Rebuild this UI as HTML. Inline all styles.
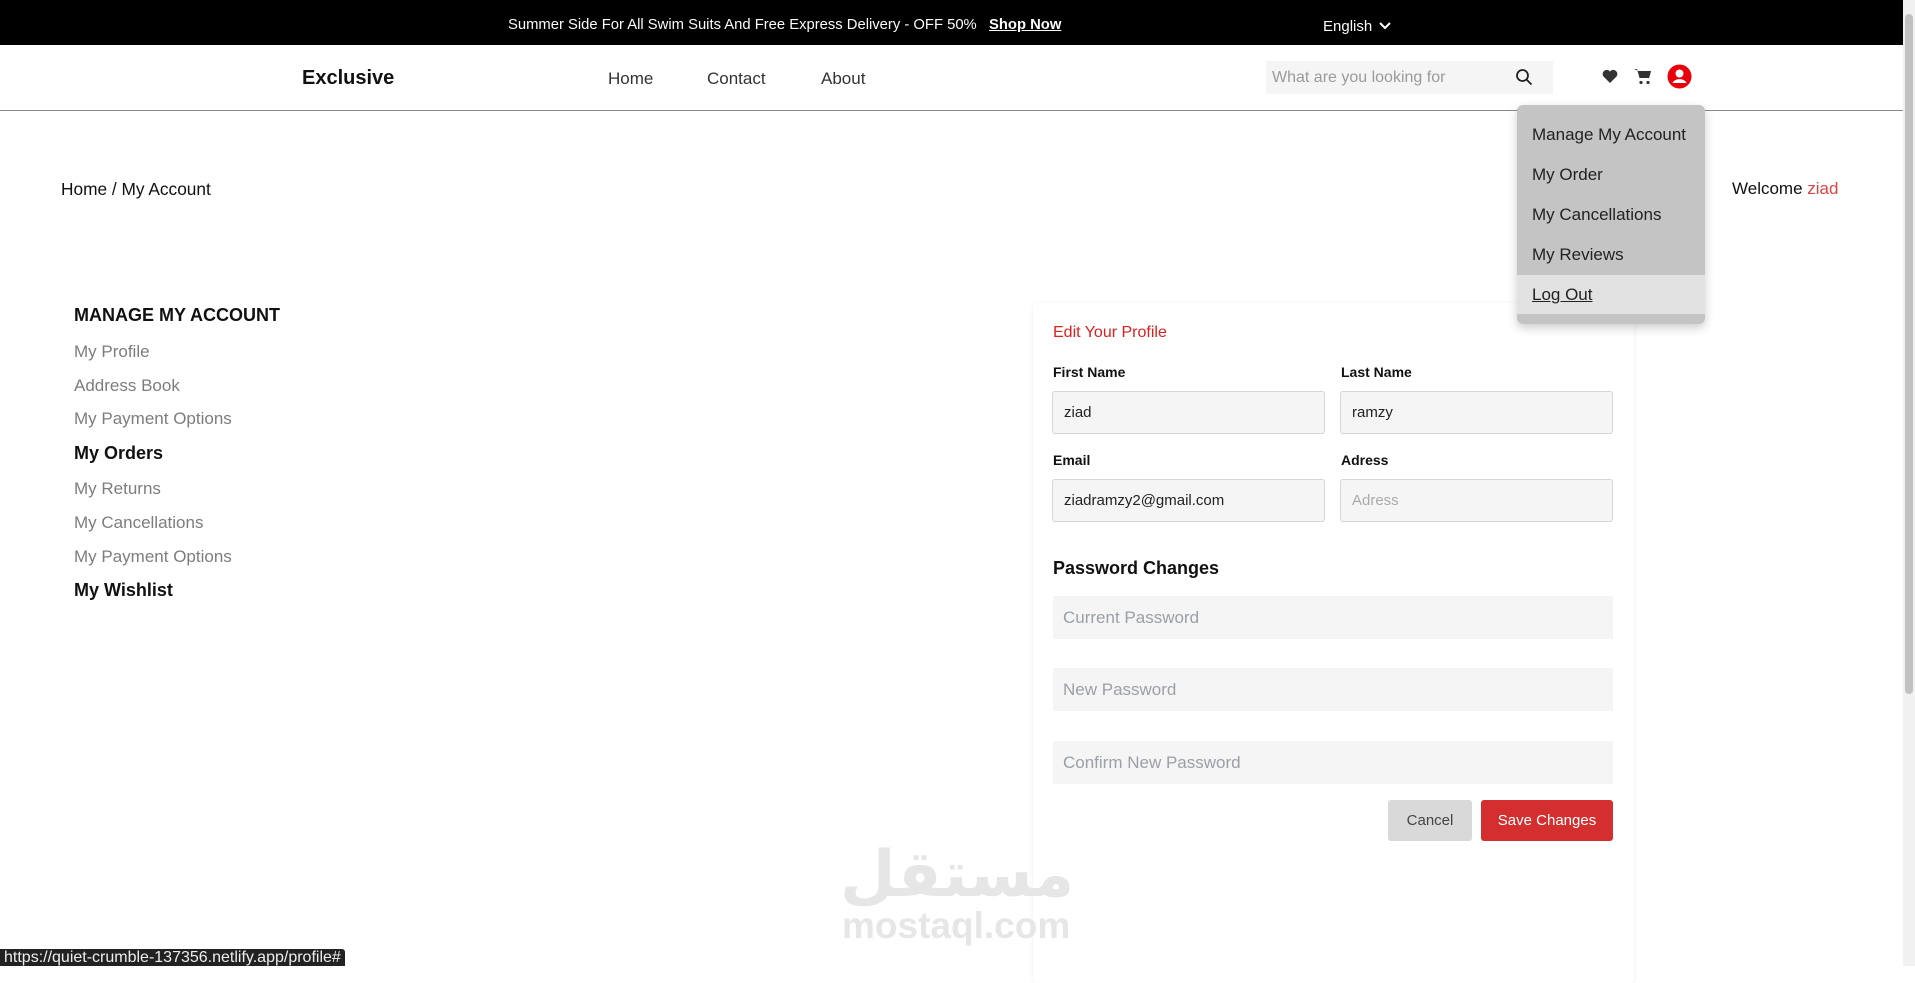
<!DOCTYPE html>
<html><head><meta charset="utf-8"><style>
*{margin:0;padding:0;box-sizing:border-box}
body{width:1915px;height:966px;overflow:hidden;background:#fff;font-family:"Liberation Sans",sans-serif;position:relative;color:#000}
.a{position:absolute;white-space:nowrap}
.top{position:absolute;left:0;top:0;width:1903px;height:45px;background:#000;color:#fafafa;font-size:15px}
.inp{position:absolute;background:#f5f5f5;border:1px solid #d6d6d6;border-radius:3px;font-size:15px;padding-left:11px;display:flex;align-items:center;color:#222}
.pw{position:absolute;background:#f5f5f5;font-size:17px;color:#9aa0a6;padding-left:10px;display:flex;align-items:center;left:1053px;width:560px;height:43px}
.side{position:absolute;left:74px;font-size:17px;color:#7d7d7d}
.dd{position:absolute;left:1532px;font-size:17px;color:#222}
</style></head><body>
<div class="top">
 <div class="a" style="left:508px;top:17px;font-size:14.8px">Summer Side For All Swim Suits And Free Express Delivery - OFF 50%</div>
 <div class="a" style="left:989px;top:17px;font-weight:bold;text-decoration:underline;font-size:14.8px">Shop Now</div>
 <div class="a" style="left:1323px;top:18px">English</div>
 <svg class="a" style="left:1379px;top:22px" width="12" height="8" viewBox="0 0 12 8"><path d="M1 1l5 5 5-5" stroke="#fff" stroke-width="2" fill="none"/></svg>
</div>
<div style="position:absolute;left:1903px;top:0;width:12px;height:966px;background:#f1f1f1"></div>
<div style="position:absolute;left:1905px;top:14px;width:8px;height:680px;background:#c1c1c1;border-radius:4px"></div>
<div class="a" style="left:302px;top:67px;font-size:20px;font-weight:bold;color:#111">Exclusive</div>
<div class="a" style="left:608px;top:69px;font-size:17px;color:#333">Home</div>
<div class="a" style="left:707px;top:69px;font-size:17px;color:#333">Contact</div>
<div class="a" style="left:821px;top:69px;font-size:17px;color:#333">About</div>
<div style="position:absolute;left:1266px;top:61px;width:287px;height:33px;background:#f5f5f5"></div>
<div class="a" style="left:1272px;top:69px;font-size:16px;color:#9a9a9a">What are you looking for</div>
<svg class="a" style="left:1515px;top:68px" width="18" height="18" viewBox="0 0 18 18"><circle cx="7.5" cy="7.5" r="5.5" stroke="#222" stroke-width="1.8" fill="none"/><path d="M11.5 11.5l5 5" stroke="#222" stroke-width="1.8"/></svg>
<svg class="a" style="left:1602px;top:69px" width="16" height="15" viewBox="0 0 16 15"><path d="M8 14L1.5 7.5A3.8 3.8 0 0 1 8 2.5a3.8 3.8 0 0 1 6.5 5z" fill="#333"/></svg>
<svg class="a" style="left:1634px;top:68px" width="18" height="17" viewBox="0 0 18 17"><path d="M0 1h3l2.5 9h9.5l2-7H4.5" fill="#333"/><path d="M4 3h13l-2 7H6z" fill="#333"/><circle cx="7" cy="14.5" r="1.6" fill="#333"/><circle cx="14" cy="14.5" r="1.6" fill="#333"/></svg>
<svg class="a" style="left:1667px;top:64px" width="25" height="25" viewBox="0 0 25 25"><circle cx="12.5" cy="12.5" r="12" fill="#e8000b"/><circle cx="12.5" cy="9.5" r="4" fill="#fff"/><path d="M5.5 19a7.5 6 0 0 1 14 0z" fill="#fff"/></svg>
<div style="position:absolute;left:0;top:110px;width:1903px;height:1px;background:#888"></div>
<div class="a" style="left:61px;top:179px;font-size:17.3px;color:#111">Home / My Account</div>
<div class="a" style="left:1732px;top:179px;font-size:17px;color:#111">Welcome <span style="color:#db4444">ziad</span></div>
<div class="a" style="left:74px;top:305px;font-size:18px;font-weight:bold;color:#111">MANAGE MY ACCOUNT</div>
<div class="side a" style="top:342px">My Profile</div>
<div class="side a" style="top:376px">Address Book</div>
<div class="side a" style="top:409px">My Payment Options</div>
<div class="a" style="left:74px;top:443px;font-size:18px;font-weight:bold;color:#111">My Orders</div>
<div class="side a" style="top:479px">My Returns</div>
<div class="side a" style="top:513px">My Cancellations</div>
<div class="side a" style="top:547px">My Payment Options</div>
<div class="a" style="left:74px;top:580px;font-size:18px;font-weight:bold;color:#111">My Wishlist</div>
<div style="position:absolute;left:1033px;top:303px;width:601px;height:680px;background:#fff;box-shadow:0 1px 6px rgba(0,0,0,.06);border-radius:4px"></div>
<div class="a" style="left:1053px;top:324px;font-size:16px;color:#db2020">Edit Your Profile</div>
<div class="a" style="left:1053px;top:364px;font-size:14px;font-weight:bold;color:#111">First Name</div>
<div class="a" style="left:1341px;top:364px;font-size:14px;font-weight:bold;color:#111">Last Name</div>
<div class="inp" style="left:1052px;top:391px;width:273px;height:43px">ziad</div>
<div class="inp" style="left:1340px;top:391px;width:273px;height:43px">ramzy</div>
<div class="a" style="left:1053px;top:452px;font-size:14px;font-weight:bold;color:#111">Email</div>
<div class="a" style="left:1341px;top:452px;font-size:14px;font-weight:bold;color:#111">Adress</div>
<div class="inp" style="left:1052px;top:479px;width:273px;height:43px">ziadramzy2@gmail.com</div>
<div class="inp" style="left:1340px;top:479px;width:273px;height:43px;color:#aaa">Adress</div>
<div class="a" style="left:1053px;top:558px;font-size:18px;font-weight:bold;color:#111">Password Changes</div>
<div class="pw" style="top:596px">Current Password</div>
<div class="pw" style="top:668px">New Password</div>
<div class="pw" style="top:741px">Confirm New Password</div>
<div style="position:absolute;left:1388px;top:800px;width:84px;height:41px;background:#d9d9d9;border-radius:3px;font-size:15px;color:#444;display:flex;align-items:center;justify-content:center">Cancel</div>
<div style="position:absolute;left:1481px;top:800px;width:132px;height:41px;background:#d32f2f;border-radius:3px;font-size:15px;color:#fff;display:flex;align-items:center;justify-content:center">Save Changes</div>
<div style="position:absolute;left:1517px;top:105px;width:188px;height:219px;background:#c4c4c4;border-radius:6px;box-shadow:0 4px 10px rgba(0,0,0,.2);overflow:hidden">
 <div style="position:absolute;left:0;top:170px;width:188px;height:39px;background:#e2e2e2"></div>
</div>
<div class="dd a" style="top:125px">Manage My Account</div>
<div class="dd a" style="top:165px">My Order</div>
<div class="dd a" style="top:205px">My Cancellations</div>
<div class="dd a" style="top:245px">My Reviews</div>
<div class="dd a" style="top:285px;text-decoration:underline">Log Out</div>
<div class="a" style="left:840px;top:838px;font-size:64px;font-weight:bold;color:#e6e6e6;font-family:'DejaVu Sans',sans-serif">مستقل</div>
<div class="a" style="left:842px;top:905px;font-size:37px;font-weight:bold;color:#e6e6e6">mostaql.com</div>
<div class="a" style="left:0;top:949px;height:17px;padding:0 4px;background:#222;color:#eee;font-size:16px;line-height:17px;border-top-right-radius:3px">https://quiet-crumble-137356.netlify.app/profile#</div>
</body></html>
